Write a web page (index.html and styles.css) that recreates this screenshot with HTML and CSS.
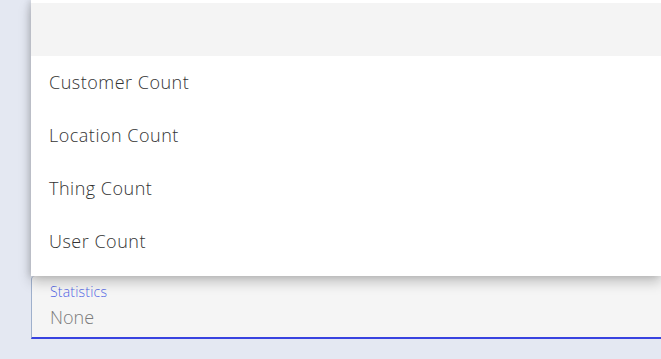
FILE: index.html
```html
<!DOCTYPE html>
<html>
<head>
<meta charset="utf-8">
<link rel="stylesheet" href="styles.css">
</head>
<body>
<div class="page">
  <div class="menu">
    <div class="menu-head"></div>
    <ul class="menu-list">
      <li class="menu-item">Customer Count</li>
      <li class="menu-item">Location Count</li>
      <li class="menu-item">Thing Count</li>
      <li class="menu-item">User Count</li>
    </ul>
  </div>
  <div class="field">
    <div class="field-label">Statistics</div>
    <div class="field-value">None</div>
  </div>
</div>
</body>
</html>
```
FILE: styles.css
```css
html, body {
  margin: 0;
  padding: 0;
  background: #e4e8f2;
  font-family: "Open Sans", "Noto Sans", sans-serif;
  overflow: hidden;
}
.page {
  width: 661px;
  height: 359px;
  display: flex;
  flex-direction: column;
}
.menu {
  position: relative;
  z-index: 2;
  margin-left: 31px;
  background: #ffffff;
  padding-top: 3px;
  padding-bottom: 8px;
  box-shadow: 0 6px 12px rgba(0, 0, 0, 0.22), -2px 0 6px rgba(0, 0, 0, 0.12);
}
.menu-head {
  height: 53px;
  background: #f4f4f4;
}
.menu-list {
  list-style: none;
  margin: 0;
  padding: 0;
}
.menu-item {
  height: 53px;
  box-sizing: border-box;
  padding-bottom: 1px;
  display: flex;
  align-items: center;
  padding-left: 18px;
  font-size: 18px;
  font-weight: 300;
  letter-spacing: 0.5px;
  color: #333333;
}
.field {
  margin-left: 31px;
  height: 61px;
  background: #f5f5f5;
  border-left: 1px solid #9fb0cc;
  border-bottom: 2px solid #3843e0;
  border-top-left-radius: 4px;
  padding-left: 18px;
  box-sizing: content-box;
}
.field-label {
  margin-top: 6px;
  font-size: 14px;
  line-height: 20px;
  font-weight: 300;
  letter-spacing: 0.2px;
  color: #4f63e4;
}
.field-value {
  margin-top: 3px;
  font-size: 18px;
  line-height: 24px;
  font-weight: 300;
  color: #7a7a7a;
}
```
